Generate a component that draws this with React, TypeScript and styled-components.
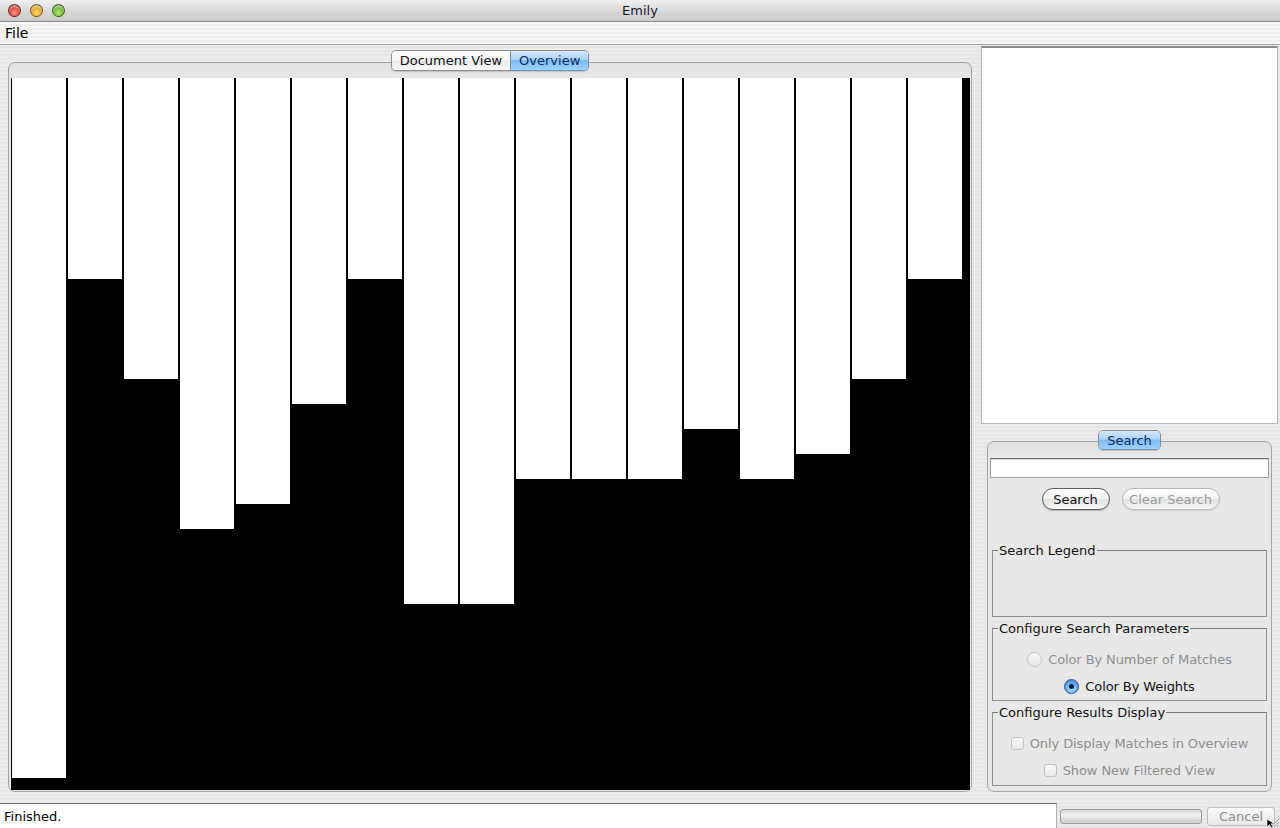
import React from "react";
import styled, { createGlobalStyle, css } from "styled-components";

const Global = createGlobalStyle`
  html, body { margin: 0; padding: 0; }
  body { font-family: "DejaVu Sans", "Liberation Sans", sans-serif; font-size: 13px; color: #000; }
`;

const Window = styled.div`
  width: 1280px;
  height: 828px;
  display: flex;
  flex-direction: column;
  overflow: hidden;
  background: repeating-linear-gradient(to bottom, #ececec 0px, #ececec 2px, #e6e6e6 2px, #e6e6e6 4px);
  position: relative;
`;

const TitleBar = styled.div`
  height: 22px;
  flex: none;
  display: flex;
  align-items: center;
  justify-content: center;
  position: relative;
  background: linear-gradient(to bottom, #f0f0f0 0%, #dadada 50%, #c9c9c9 100%);
  border-bottom: 1px solid #8c8c8c;
  box-sizing: border-box;
  font-size: 13px;
  color: #1a1a1a;
`;

const Lights = styled.div`
  position: absolute;
  left: 8px;
  top: 4px;
  display: flex;
  gap: 9px;
`;

const Light = styled.span<{ $c: string; $d: string }>`
  width: 13px;
  height: 13px;
  border-radius: 50%;
  box-sizing: border-box;
  border: 1px solid rgba(0, 0, 0, 0.45);
  background: radial-gradient(circle at 50% 70%, ${(p) => p.$c} 0%, ${(p) => p.$d} 75%);
  box-shadow: inset 0 2px 2px rgba(255, 255, 255, 0.55);
`;

const MenuBar = styled.div`
  height: 22px;
  flex: none;
  display: flex;
  align-items: center;
  padding-left: 5px;
  background: repeating-linear-gradient(to bottom, #f6f6f6 0px, #f6f6f6 2px, #efefef 2px, #efefef 4px);
  border-bottom: 1px solid #a0a0a0;
  font-size: 14px;
`;

const Body = styled.div`
  flex: 1;
  display: flex;
  padding: 1px 2px 0 8px;
  gap: 8px;
  min-height: 0;
`;

const LeftPane = styled.div`
  width: 964px;
  display: flex;
  flex-direction: column;
  padding-top: 4px;
`;

const TabRow = styled.div`
  display: flex;
  justify-content: center;
  position: relative;
  z-index: 2;
  height: 21px;
  margin-bottom: -9px;
`;

const TabGroup = styled.div`
  display: flex;
  border: 1px solid #8a8a8a;
  border-radius: 5px;
  overflow: hidden;
  box-shadow: 0 1px 1px rgba(0, 0, 0, 0.15);
`;

const aquaBlue = css`
  background: linear-gradient(to bottom, #d3e9fe 0%, #a8d2fb 45%, #7cbcf7 50%, #9fd2fd 100%);
`;

const Tab = styled.div<{ $active?: boolean }>`
  padding: 0 8px;
  display: flex;
  align-items: center;
  font-size: 13px;
  color: #111;
  background: linear-gradient(to bottom, #ffffff 0%, #f4f4f4 50%, #e9e9e9 51%, #f8f8f8 100%);
  & + & { border-left: 1px solid #8a8a8a; }
  ${(p) => p.$active && aquaBlue}
  ${(p) => p.$active && css`color: #0b2a55;`}
`;

const TabBox = styled.div`
  flex: 1;
  border: 1px solid #a4a4a4;
  border-radius: 7px;
  padding: 15px 1px 1px 2px;
  background: linear-gradient(to bottom, #e2e2e2 0px, #e8e8e8 16px, #e8e8e8 100%);
  display: flex;
  margin-bottom: 8px;
`;

const Chart = styled.div`
  flex: 1;
  background: #000;
  display: flex;
  align-items: flex-start;
  gap: 2px;
  padding-left: 1px;
  height: 712px;
`;

const Bar = styled.div`
  width: 54px;
  background: #fff;
  flex: none;
`;

const RightPane = styled.div`
  flex: 1;
  display: flex;
  flex-direction: column;
`;

const Preview = styled.div`
  height: 378px;
  background: #fff;
  border: 1px solid #b4b4b4;
  border-top: 2px solid #8c8c8c;
  box-sizing: border-box;
  margin-left: 1px;
`;

const SearchPane = styled.div`
  display: flex;
  flex-direction: column;
  padding: 6px 6px 0 7px;
`;

const SearchTabRow = styled(TabRow)`
  height: 20px;
  margin-bottom: -9px;
`;

const SearchBox = styled.div`
  height: 351px;
  box-sizing: border-box;
  border: 1px solid #a4a4a4;
  border-radius: 7px;
  background: linear-gradient(to bottom, #e0e0e0 0px, #e8e8e8 14px, #e8e8e8 100%);
  padding: 16px 2px 0 2px;
  display: flex;
  flex-direction: column;
`;

const TextInput = styled.div`
  height: 20px;
  box-sizing: border-box;
  background: #fff;
  border: 1px solid #9d9d9d;
  border-top-color: #6e6e6e;
  box-shadow: inset 0 1px 1px rgba(0, 0, 0, 0.15);
`;

const ButtonRow = styled.div`
  display: flex;
  justify-content: center;
  gap: 12px;
  margin-top: 10px;
  padding-left: 2px;
`;

const PushButton = styled.div<{ $disabled?: boolean; $w: number }>`
  width: ${(p) => p.$w}px;
  height: 22px;
  box-sizing: border-box;
  border-radius: 11px;
  border: 1px solid ${(p) => (p.$disabled ? "#b8b8b8" : "#5e5e5e")};
  background: linear-gradient(to bottom, #ffffff 0%, #f2f2f2 50%, #e2e2e2 51%, #f6f6f6 100%);
  display: flex;
  align-items: center;
  justify-content: center;
  font-size: 13px;
  color: ${(p) => (p.$disabled ? "#9a9a9a" : "#111")};
  box-shadow: 0 1px 1px rgba(0, 0, 0, ${(p) => (p.$disabled ? 0.08 : 0.25)});
`;

const Groups = styled.div`
  display: flex;
  flex-direction: column;
  padding: 0 2px;
  margin-top: 40px;
  gap: 11px;
`;

const GroupBox = styled.div<{ $h: number }>`
  position: relative;
  height: ${(p) => p.$h}px;
  box-sizing: border-box;
  border: 1px solid #8e8e8e;
  border-top-color: #7a7a7a;
  padding-top: 17px;
  display: flex;
  flex-direction: column;
  align-items: center;
`;

const GroupTitle = styled.span`
  position: absolute;
  top: -8px;
  left: 5px;
  padding: 0 1px;
  font-size: 13px;
  line-height: 16px;
  background: #e8e8e8;
  color: #111;
`;

const OptionRow = styled.div<{ $disabled?: boolean }>`
  height: 27px;
  display: flex;
  align-items: center;
  gap: 6px;
  font-size: 13px;
  letter-spacing: -0.1px;
  color: ${(p) => (p.$disabled ? "#8e8e8e" : "#111")};
`;

const Radio = styled.span<{ $checked?: boolean }>`
  width: 15px;
  height: 15px;
  border-radius: 50%;
  box-sizing: border-box;
  display: flex;
  align-items: center;
  justify-content: center;
  ${(p) =>
    p.$checked
      ? css`
          border: 1px solid #2d4f86;
          background: radial-gradient(circle at 50% 70%, #b9e0ff 0%, #5fa6ee 55%, #3c7ed3 100%);
          &::after {
            content: "";
            width: 5px;
            height: 5px;
            border-radius: 50%;
            background: #0c1a30;
          }
        `
      : css`
          border: 1px solid #c4c4c4;
          background: linear-gradient(to bottom, #fafafa, #e6e6e6);
        `}
`;

const Checkbox = styled.span`
  width: 13px;
  height: 13px;
  box-sizing: border-box;
  border-radius: 3px;
  border: 1px solid #c2c2c2;
  background: linear-gradient(to bottom, #fbfbfb, #e8e8e8);
`;

const StatusBar = styled.div`
  height: 28px;
  flex: none;
  display: flex;
  align-items: flex-end;
  gap: 3px;
`;

const StatusField = styled.div`
  width: 1057px;
  height: 25px;
  box-sizing: border-box;
  background: #fff;
  border-top: 1px solid #6f6f6f;
  border-right: 1px solid #b0b0b0;
  display: flex;
  align-items: center;
  padding-left: 4px;
  font-size: 13px;
`;

const Progress = styled.div`
  width: 142px;
  height: 15px;
  box-sizing: border-box;
  align-self: center;
  margin-top: 4px;
  border: 1px solid #9a9a9a;
  border-radius: 3px;
  background: linear-gradient(to bottom, #d6d6d6 0%, #f4f4f4 40%, #e3e3e3 60%, #cfcfcf 100%);
`;

const CancelButton = styled.div`
  width: 68px;
  height: 19px;
  box-sizing: border-box;
  margin: 0 0 2px 2px;
  border: 1px solid #bdbdbd;
  border-radius: 3px;
  background: linear-gradient(to bottom, #fafafa, #e8e8e8);
  color: #8e8e8e;
  font-size: 13px;
  display: flex;
  align-items: center;
  justify-content: center;
`;

const Grip = styled.svg`
  position: absolute;
  right: 0;
  bottom: 0;
`;

const bars = [700, 201, 301, 451, 426, 326, 201, 526, 526, 401, 401, 401, 351, 401, 376, 301, 201];

export default function App() {
  return (
    <>
      <Global />
      <Window>
        <TitleBar>
          <Lights>
            <Light $c="#ff9a8a" $d="#c8261a" />
            <Light $c="#ffe07a" $d="#d98a0c" />
            <Light $c="#b6ef7a" $d="#4c9a12" />
          </Lights>
          Emily
        </TitleBar>
        <MenuBar>File</MenuBar>
        <Body>
          <LeftPane>
            <TabRow>
              <TabGroup>
                <Tab>Document View</Tab>
                <Tab $active>Overview</Tab>
              </TabGroup>
            </TabRow>
            <TabBox>
              <Chart>
                {bars.map((h, i) => (
                  <Bar key={i} style={{ height: h }} />
                ))}
              </Chart>
            </TabBox>
          </LeftPane>
          <RightPane>
            <Preview />
            <SearchPane>
              <SearchTabRow>
                <TabGroup>
                  <Tab $active>Search</Tab>
                </TabGroup>
              </SearchTabRow>
              <SearchBox>
                <TextInput />
                <ButtonRow>
                  <PushButton $w={68}>Search</PushButton>
                  <PushButton $w={98} $disabled>
                    Clear Search
                  </PushButton>
                </ButtonRow>
                <Groups>
                  <GroupBox $h={67}>
                    <GroupTitle>Search Legend</GroupTitle>
                  </GroupBox>
                  <GroupBox $h={73}>
                    <GroupTitle>Configure Search Parameters</GroupTitle>
                    <OptionRow $disabled>
                      <Radio />
                      Color By Number of Matches
                    </OptionRow>
                    <OptionRow>
                      <Radio $checked />
                      Color By Weights
                    </OptionRow>
                  </GroupBox>
                  <GroupBox $h={74}>
                    <GroupTitle>Configure Results Display</GroupTitle>
                    <OptionRow $disabled>
                      <Checkbox />
                      Only Display Matches in Overview
                    </OptionRow>
                    <OptionRow $disabled>
                      <Checkbox />
                      Show New Filtered View
                    </OptionRow>
                  </GroupBox>
                </Groups>
              </SearchBox>
            </SearchPane>
          </RightPane>
        </Body>
        <StatusBar>
          <StatusField>Finished.</StatusField>
          <Progress />
          <CancelButton>Cancel</CancelButton>
        </StatusBar>
        <Grip width="14" height="14" viewBox="0 0 14 14">
          <path d="M13 5 L5 13 M13 8 L8 13 M13 11 L11 13" stroke="#9a9a9a" strokeWidth="1" />
          <path d="M1 5 L1 13 L3.5 10.5 L5.5 14 L7 13.2 L5 9.8 L8.5 9.8 Z" fill="#000" stroke="#fff" strokeWidth="0.6" />
        </Grip>
      </Window>
    </>
  );
}
